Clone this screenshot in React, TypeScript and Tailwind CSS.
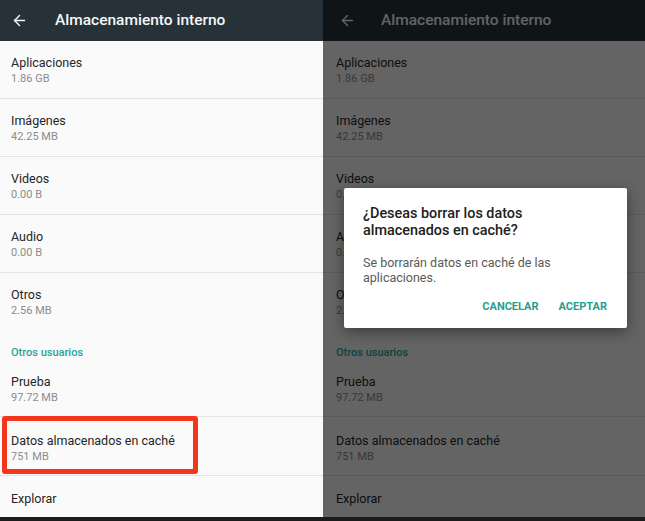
import { ArrowLeft } from "lucide-react";

type Item = { title: string; size?: string; h: string; pt: string; border?: boolean };

const items: Item[] = [
  { title: "Aplicaciones", size: "1.86 GB", h: "h-[58px]", pt: "pt-[14px]", border: true },
  { title: "Imágenes", size: "42.25 MB", h: "h-[58px]", pt: "pt-[14px]", border: true },
  { title: "Videos", size: "0.00 B", h: "h-[58px]", pt: "pt-[14px]", border: true },
  { title: "Audio", size: "0.00 B", h: "h-[58px]", pt: "pt-[14px]", border: true },
  { title: "Otros", size: "2.56 MB", h: "h-[58px]", pt: "pt-[14px]" },
];

const others: Item[] = [
  { title: "Prueba", size: "97.72 MB", h: "h-[50px]", pt: "pt-[7px]", border: true },
  { title: "Datos almacenados en caché", size: "751 MB", h: "h-[59px]", pt: "pt-[16px]", border: true },
  { title: "Explorar", h: "h-[41px]", pt: "pt-[15px]" },
];

function Row({ item, dimmed }: { item: Item; dimmed?: boolean }) {
  return (
    <div
      className={`${item.h} ${item.pt} ${dimmed ? "pl-[13px]" : "pl-[11px]"} ${
        item.border ? "border-b border-[#e4e4e4]" : ""
      }`}
    >
      <div className="text-[12.5px] leading-[16px] text-[#262626]">{item.title}</div>
      {item.size && <div className="mt-[1px] text-[11px] leading-[14px] text-[#8c8c8c]">{item.size}</div>}
    </div>
  );
}

function Screen({ dimmed }: { dimmed?: boolean }) {
  return (
    <div className="flex h-[517px] flex-col bg-[#fafafa]">
      <div className="flex h-[41px] shrink-0 items-center bg-[#263238] text-[#f5f7f8]">
        <ArrowLeft className={dimmed ? "ml-[16px] h-[17px] w-[17px]" : "ml-[11px] h-[17px] w-[17px]"} strokeWidth={2} />
        <span className={`${dimmed ? "ml-[25px]" : "ml-[27px]"} text-[15.5px] font-medium`}>
          Almacenamiento interno
        </span>
      </div>
      {items.map((it) => (
        <Row key={it.title} item={it} dimmed={dimmed} />
      ))}
      <div className={`h-[37px] pt-[16px] ${dimmed ? "pl-[13px]" : "pl-[11px]"} text-[11px] font-medium leading-[14px] text-[#26a69a]`}>
        Otros usuarios
      </div>
      {others.map((it) => (
        <Row key={it.title} item={it} dimmed={dimmed} />
      ))}
    </div>
  );
}

export default function App() {
  return (
    <div className="h-[521px] w-[645px] overflow-hidden bg-[#1c1c1c]" style={{ fontFamily: "Roboto, 'Noto Sans', sans-serif" }}>
      <div className="flex">
        <div className="relative w-[323px]">
          <Screen />
          <div className="absolute left-[2px] top-[416px] h-[58px] w-[196px] rounded-[3px] border-[5px] border-[#f4361c]" />
        </div>
        <div className="relative w-[322px]">
          <Screen dimmed />
          <div className="absolute inset-0 bg-black/60" />
          <div className="absolute left-[21px] top-[188px] h-[140px] w-[283px] rounded-[2px] bg-white px-[19px] pt-[17px] shadow-[0_4px_14px_rgba(0,0,0,0.4)]">
            <div className="text-[14.4px] font-medium leading-[17px] text-[#212121]">
              ¿Deseas borrar los datos almacenados en caché?
            </div>
            <div className="mt-[16px] text-[12.5px] leading-[15px] text-[#5a5a5a]">
              Se borrarán datos en caché de las aplicaciones.
            </div>
            <div className="mt-[15px] flex justify-end gap-[20px] pr-px text-[11px] font-bold leading-[13px] text-[#1fa090]">
              <span>CANCELAR</span>
              <span>ACEPTAR</span>
            </div>
          </div>
        </div>
      </div>
    </div>
  );
}
